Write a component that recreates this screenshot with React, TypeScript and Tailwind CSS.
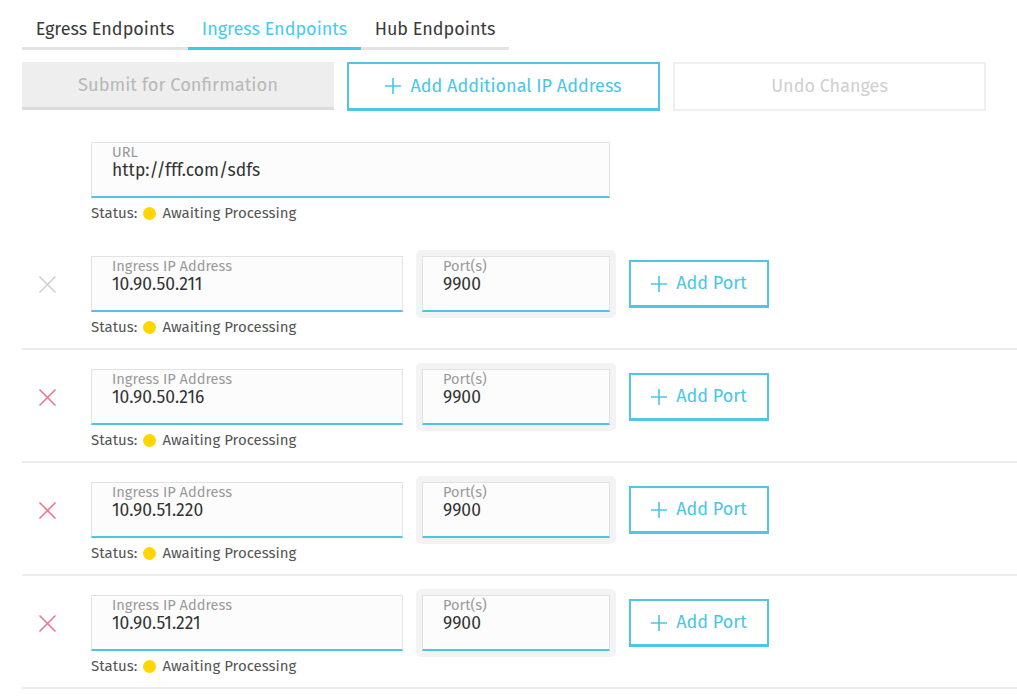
import React from 'react';

const rows = [
  { ip: '10.90.50.211', port: '9900', removable: false },
  { ip: '10.90.50.216', port: '9900', removable: true },
  { ip: '10.90.51.220', port: '9900', removable: true },
  { ip: '10.90.51.221', port: '9900', removable: true },
];

function XIcon({ color }: { color: string }) {
  return (
    <svg width="19" height="19" viewBox="0 0 19 19" fill="none" stroke={color} strokeWidth="1.6">
      <path d="M1.5 1.5 L17.5 17.5 M17.5 1.5 L1.5 17.5" />
    </svg>
  );
}

function PlusIcon() {
  return (
    <svg width="16" height="16" viewBox="0 0 16 16" fill="none" stroke="currentColor" strokeWidth="1.6">
      <path d="M8 0 V16 M0 8 H16" />
    </svg>
  );
}

function Status() {
  return (
    <div className="flex items-center h-5 text-[15px] text-[#555]">
      <span>Status:</span>
      <span className="ml-[6px] w-[13px] h-[13px] rounded-full bg-[#ffd600]" />
      <span className="ml-[6px]">Awaiting Processing</span>
    </div>
  );
}

function Field({ label, value, width }: { label: string; value: string; width: string }) {
  return (
    <div className={`${width} h-[56px] bg-[#fcfcfc] border border-[#e2e2e2] border-b-2 border-b-[#4cc6e4] pl-[20px] pt-[1px]`}>
      <div className="text-[14.6px] leading-[17px] text-[#9a9a9a]">{label}</div>
      <div className="text-[17.5px] leading-[20px] text-[#333]">{value}</div>
    </div>
  );
}

export default function App() {
  return (
    <div className="w-[1017px] h-[699px] bg-white overflow-hidden pl-[22px] pt-[16px]" style={{ fontFamily: '"Fira Sans", "Open Sans", sans-serif' }}>
      {/* tabs */}
      <div className="flex w-[487px] border-b-[3px] border-[#e3e3e3]">
        <div className="w-[166px] h-[31px] flex justify-center items-start text-[18px] text-[#3b3b3b]">Egress Endpoints</div>
        <div className="w-[173px] h-[31px] -mb-[3px] flex justify-center items-start text-[18px] text-[#44cdf0] border-b-[3px] border-[#3ccbef] box-content">Ingress Endpoints</div>
        <div className="w-[148px] h-[31px] flex justify-center items-start text-[18px] text-[#3b3b3b]">Hub Endpoints</div>
      </div>

      {/* actions */}
      <div className="flex gap-[13px] mt-[12px]">
        <button className="w-[312px] h-[48px] bg-[#eeeeee] border-b-[3px] border-[#dcdcdc] text-[18.3px] text-[#b8b8b8] pt-[2px]">
          Submit for Confirmation
        </button>
        <button className="w-[313px] h-[49px] border-2 border-b-[3px] border-[#4ec6e4] text-[18px] text-[#49c6e6] flex items-center justify-center gap-[9px]">
          <PlusIcon />
          Add Additional IP Address
        </button>
        <button className="w-[313px] h-[49px] border-2 border-[#efefef] text-[18px] text-[#cfcfcf]">
          Undo Changes
        </button>
      </div>

      {/* url */}
      <div className="pl-[69px] mt-[31px]">
        <Field label="URL" value="http://fff.com/sdfs" width="w-[519px]" />
        <div className="mt-[5px]">
          <Status />
        </div>
      </div>

      {/* ip rows */}
      <div className="mt-[17px]">
        {rows.map((r, i) => (
          <div key={i} className={`border-b-2 border-[#ececec] pb-[11px] ${i === 0 ? 'pt-[16px]' : 'pt-[19px]'}`}>
            <div className="flex items-center">
              <div className="w-[69px] flex justify-start pl-[16px]">
                <XIcon color={r.removable ? '#e8788c' : '#cfcfcf'} />
              </div>
              <Field label="Ingress IP Address" value={r.ip} width="w-[312px]" />
              <div className="ml-[13px] -my-[7px] p-[6px] bg-[#f3f3f3] rounded-[5px]">
                <Field label="Port(s)" value={r.port} width="w-[188px]" />
              </div>
              <button className="ml-[13px] w-[140px] h-[48px] border-2 border-b-[3px] border-[#4ec6e4] text-[18px] text-[#49c6e6] flex items-center justify-center gap-[9px]">
                <PlusIcon />
                Add Port
              </button>
            </div>
            <div className="pl-[69px] mt-[5px]">
              <Status />
            </div>
          </div>
        ))}
      </div>
    </div>
  );
}
